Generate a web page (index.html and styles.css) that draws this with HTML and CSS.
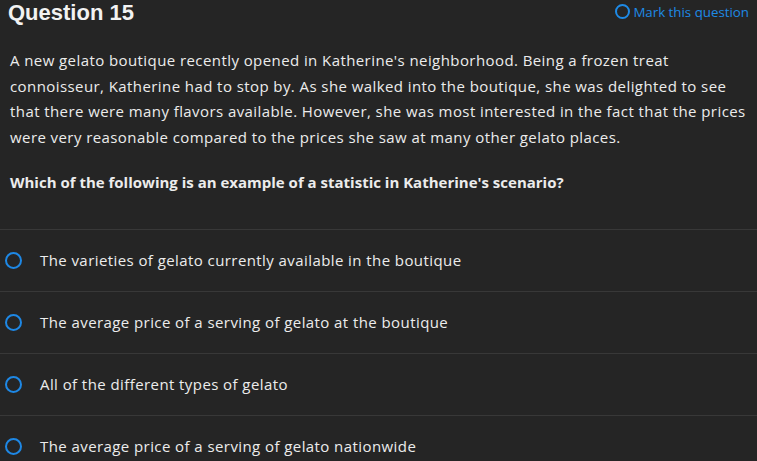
FILE: index.html
```html
<!DOCTYPE html>
<html>
<head>
<meta charset="utf-8">
<link rel="stylesheet" href="styles.css">
</head>
<body>
<div class="page">
  <div class="header">
    <h1 class="title">Question 15</h1>
    <a class="mark"><span class="mark-icon"></span>Mark this question</a>
  </div>
  <p class="stem">A new gelato boutique recently opened in Katherine's neighborhood. Being a frozen treat connoisseur, Katherine had to stop by. As she walked into the boutique, she was delighted to see that there were many flavors available. However, she was most interested in the fact that the prices were very reasonable compared to the prices she saw at many other gelato places.</p>
  <p class="prompt">Which of the following is an example of a statistic in Katherine's scenario?</p>
  <ul class="options">
    <li class="option"><span class="radio"></span><span class="label">The varieties of gelato currently available in the boutique</span></li>
    <li class="option"><span class="radio"></span><span class="label">The average price of a serving of gelato at the boutique</span></li>
    <li class="option"><span class="radio"></span><span class="label">All of the different types of gelato</span></li>
    <li class="option"><span class="radio"></span><span class="label">The average price of a serving of gelato nationwide</span></li>
  </ul>
</div>
</body>
</html>
```

FILE: styles.css
```css
html, body {
  margin: 0;
  padding: 0;
  background: #252525;
}
body {
  font-family: "Open Sans", "Noto Sans", sans-serif;
  color: #ececec;
  overflow: hidden;
}
.page {
  width: 757px;
}
.header {
  display: flex;
  justify-content: space-between;
  align-items: flex-start;
  padding: 0 8px 0 8px;
  height: 25px;
}
.title {
  margin: 0;
  font-family: "Liberation Sans", Arial, sans-serif;
  font-size: 22px;
  font-weight: 700;
  color: #f2f2f2;
  line-height: 25px;
}
.mark {
  display: flex;
  align-items: center;
  align-self: center;
  margin-bottom: 2px;
  gap: 3px;
  color: #1e8ae6;
  font-size: 13.3px;
}
.mark-icon {
  width: 11px;
  height: 11px;
  border: 2px solid #1e8ae6;
  border-radius: 50%;
}
.stem {
  margin: 23px 0 0;
  padding: 0 10px;
  font-size: 15px;
  letter-spacing: 0.42px;
  line-height: 25.6px;
}
.prompt {
  margin: 20px 0 0;
  padding: 0 10px;
  font-size: 15px;
  font-weight: 700;
  line-height: 25.6px;
}
.options {
  list-style: none;
  margin: 33px 0 0;
  padding: 0;
}
.option {
  display: flex;
  align-items: center;
  height: 61px;
  border-top: 1px solid #383838;
  padding-left: 5px;
  font-size: 15px;
  letter-spacing: 0.42px;
}
.radio {
  width: 13px;
  height: 13px;
  border: 2px solid #1e88e5;
  border-radius: 50%;
  flex: none;
}
.label {
  margin-left: 18px;
}
```
